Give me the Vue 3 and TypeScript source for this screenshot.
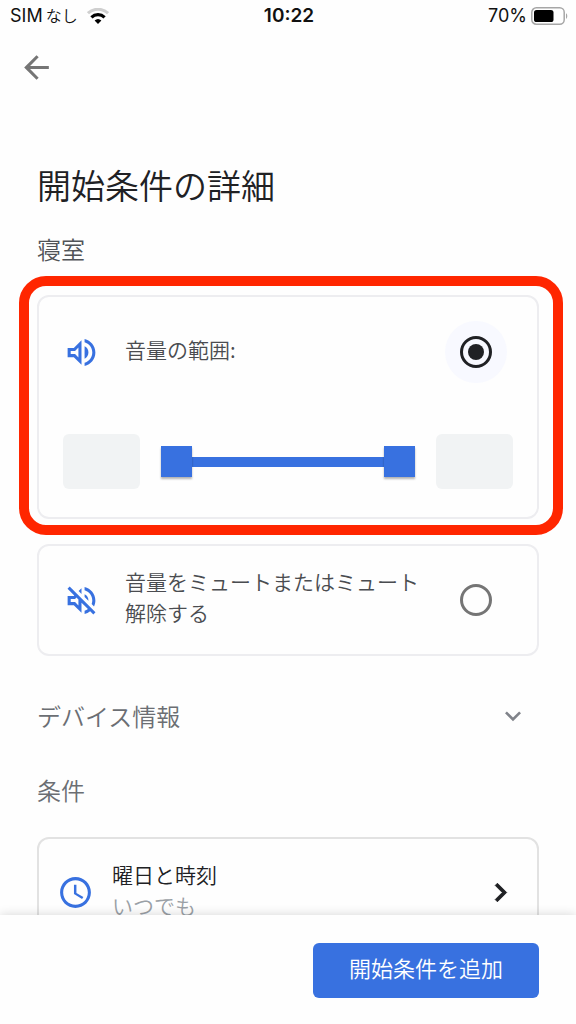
<script setup lang="ts">
import { ref } from 'vue'

type Trigger = 'range' | 'mute'

const selected = ref<Trigger>('range')
const low = ref<number>(0)
const high = ref<number>(100)
const lowText = ref<string>('')
const highText = ref<string>('')
</script>

<template>
  <div class="screen">
    <header>
      <div class="status">
        <div class="carrier">
          <span class="sim">SIM<span class="none">なし</span></span>
          <svg class="wifi" viewBox="0 0 22 16" aria-hidden="true">
            <path d="M1 5.2a14.6 14.6 0 0 1 20 0" fill="none" stroke="#cfcfcf" stroke-width="3" />
            <path d="M4.4 9.3a9.6 9.6 0 0 1 13.2 0" fill="none" stroke="#000" stroke-width="3.2" />
            <path d="M11 16l-3.4-3.4a5 5 0 0 1 6.8 0z" fill="#000" />
          </svg>
        </div>
        <time>10:22</time>
        <div class="power">
          <span>70%</span>
          <svg class="battery" viewBox="0 0 37 18" aria-hidden="true">
            <rect x="0.8" y="0.8" width="32.4" height="16.4" rx="4.5" fill="none" stroke="#a6a6a6" stroke-width="1.5" />
            <rect x="3" y="3" width="19.5" height="12" rx="2.6" fill="#000" />
            <path d="M35 6.2c1.7.8 1.7 4.8 0 5.6z" fill="#a6a6a6" />
          </svg>
        </div>
      </div>
      <nav>
        <button class="back" type="button" aria-label="戻る">
          <svg class="icon" viewBox="0 0 24 24"><path d="M20 11H7.83l5.59-5.59L12 4l-8 8 8 8 1.41-1.41L7.83 13H20v-2z" /></svg>
        </button>
      </nav>
    </header>

    <main>
      <h1>開始条件の詳細</h1>
      <h2 class="room">寝室</h2>

      <section class="card range-card">
        <div class="option">
          <svg class="icon blue" viewBox="0 0 24 24" aria-hidden="true">
            <path d="M3 9v6h4l5 5V4L7 9H3zm7-.17v6.34L7.83 13H5v-2h2.83L10 8.83zM16.5 12A4.5 4.5 0 0 0 14 7.97v8.05c1.48-.73 2.5-2.25 2.5-4.02zM14 3.23v2.06c2.89.86 5 3.54 5 6.71s-2.11 5.85-5 6.71v2.06c4.01-.91 7-4.49 7-8.77s-2.99-7.86-7-8.77z" />
          </svg>
          <label for="trigger-range">音量の範囲:</label>
          <span class="halo"><input id="trigger-range" v-model="selected" type="radio" name="trigger" value="range" /></span>
        </div>
        <div class="levels">
          <input v-model="lowText" class="level" type="text" aria-label="最小音量" />
          <div class="slider">
            <input v-model.number="low" type="range" min="0" max="100" aria-label="最小" />
            <input v-model.number="high" type="range" min="0" max="100" aria-label="最大" />
          </div>
          <input v-model="highText" class="level" type="text" aria-label="最大音量" />
        </div>
      </section>

      <section class="card mute-card">
        <div class="option">
          <svg class="icon blue" viewBox="0 0 24 24" aria-hidden="true">
            <path d="M4.34 2.93L2.93 4.34 7.29 8.7 7 9H3v6h4l5 5v-6.59l4.18 4.18c-.65.49-1.38.88-2.18 1.11v2.06a8.94 8.94 0 0 0 3.61-1.75l2.05 2.05 1.41-1.41L4.34 2.93zM10 15.17L7.83 13H5v-2h2.83l.88-.88L10 11.41v3.76zM19 12c0 .82-.15 1.61-.41 2.34l1.53 1.53c.56-1.17.88-2.48.88-3.87 0-4.28-2.99-7.86-7-8.77v2.06c2.89.86 5 3.54 5 6.71zm-7-8l-1.88 1.88L12 7.76V4zm4.5 8A4.5 4.5 0 0 0 14 7.97v1.79l2.48 2.48c.01-.08.02-.16.02-.24z" />
          </svg>
          <label for="trigger-mute">音量をミュートまたはミュート解除する</label>
          <span class="halo"><input id="trigger-mute" v-model="selected" type="radio" name="trigger" value="mute" /></span>
        </div>
      </section>

      <button class="device" type="button">
        <span>デバイス情報</span>
        <svg viewBox="0 0 24 24" aria-hidden="true"><path d="M16.59 8.59L12 13.17 7.41 8.59 6 10l6 6 6-6z" /></svg>
      </button>

      <h2 class="conditions">条件</h2>

      <button class="card schedule" type="button">
        <svg class="icon blue" viewBox="0 0 24 24" aria-hidden="true">
          <path d="M11.99 2C6.47 2 2 6.48 2 12s4.47 10 9.99 10C17.52 22 22 17.52 22 12S17.52 2 11.99 2zM12 20c-4.42 0-8-3.58-8-8s3.58-8 8-8 8 3.58 8 8-3.58 8-8 8zm.6-13H11v6l5.25 3.25.85-1.33-4.5-2.67z" />
        </svg>
        <span class="when">
          <span>曜日と時刻</span>
          <span class="muted">いつでも</span>
        </span>
        <svg class="icon dark" viewBox="0 0 24 24" aria-hidden="true"><path d="M10 6L8.59 7.41 13.17 12l-4.58 4.59L10 18l6-6z" /></svg>
      </button>
    </main>

    <footer>
      <button class="add" type="button">開始条件を追加</button>
    </footer>
  </div>
</template>

<style>
body {
  margin: 0;
  background: #fefefe;
}
</style>

<style scoped>
.screen {
  display: flex;
  flex-direction: column;
  height: 100vh;
  background: #fefefe;
  color: #202124;
  font-family: "Noto Sans CJK JP", sans-serif;
  font-weight: 350;
}

button,
input {
  margin: 0;
  padding: 0;
  border: 0;
  background: none;
  color: inherit;
  font: inherit;
}

.icon {
  flex: none;
  display: block;
  width: 37px;
  height: 37px;
  fill: currentColor;
}

.blue {
  color: #3871e0;
}

.dark {
  color: #202124;
  stroke: currentColor;
  stroke-width: 0.6;
}

.status {
  display: grid;
  grid-template-columns: 1fr auto 1fr;
  align-items: center;
  height: 32px;
  padding: 0 8px 0 10px;
  color: #111;
  font-family: Inter, "Noto Sans CJK JP", sans-serif;
  font-size: 18px;
  font-weight: 400;
  line-height: 24px;
}

.carrier,
.power {
  display: flex;
  align-items: center;
}

.carrier {
  gap: 9px;
}

.sim {
  display: flex;
  gap: 3px;
}

.none {
  font-size: 16px;
  font-weight: 350;
}

.power {
  justify-content: flex-end;
  gap: 4px;
}

.wifi {
  width: 22px;
  height: 16px;
}

.battery {
  width: 37px;
  height: 18px;
}

time {
  font-size: 19px;
  font-weight: 600;
}

nav {
  padding: 17px 18px;
}

.back {
  display: block;
  color: #757575;
}

main {
  flex: 1;
  min-height: 0;
  padding: 58px 37px 0;
  overflow-y: auto;
  scrollbar-width: none;
}

h1,
h2 {
  margin: 0;
  font-weight: 350;
}

h1 {
  font-size: 34px;
  line-height: 48px;
}

h2,
.device {
  font-size: 24px;
  line-height: 36px;
}

.room {
  margin: 22px 0 28px;
  color: #505357;
}

.card {
  box-sizing: border-box;
  border: 2px solid #ededf0;
  border-radius: 12px;
}

.range-card {
  position: relative;
  padding: 24px 24px 28px;
}

.range-card::after {
  content: "";
  position: absolute;
  inset: -21px -26px -18px -20px;
  border: 10px solid #ff2600;
  border-radius: 27px;
  pointer-events: none;
}

.mute-card {
  margin-top: 25px;
  padding: 20px 24px;
}

.option {
  display: flex;
  align-items: center;
  padding-right: 6px;
}

.option label {
  flex: 1;
  margin: 0 20px 0 25px;
  padding-bottom: 6px;
  color: #4a4c50;
  font-size: 21px;
  line-height: 31px;
}

.halo {
  display: grid;
  place-items: center;
  width: 62px;
  height: 62px;
  border-radius: 50%;
}

.halo:has(:checked) {
  background: #f8f9ff;
}

input[type="radio"] {
  appearance: none;
  display: grid;
  place-items: center;
  box-sizing: border-box;
  width: 32px;
  height: 32px;
  border: 3px solid #757575;
  border-radius: 50%;
}

input[type="radio"]:checked {
  border-color: #202124;
}

input[type="radio"]:checked::before {
  content: "";
  width: 16px;
  height: 16px;
  border-radius: 50%;
  background: #202124;
}

.levels {
  display: flex;
  align-items: center;
  gap: 21px;
  margin-top: 51px;
}

.level {
  box-sizing: border-box;
  flex: none;
  width: 77px;
  height: 55px;
  border-radius: 6px;
  background: #f1f3f4;
  font-size: 21px;
  text-align: center;
}

.slider {
  flex: 1;
  display: grid;
  align-items: center;
  min-width: 0;
}

.slider::before {
  content: "";
  grid-area: 1 / 1;
  height: 10px;
  background: #3871e0;
}

.slider input {
  grid-area: 1 / 1;
  appearance: none;
  width: 100%;
  height: 31px;
  pointer-events: none;
}

.slider input::-webkit-slider-thumb {
  appearance: none;
  width: 31px;
  height: 31px;
  background: #3871e0;
  box-shadow: 0 2px 2px rgba(0, 0, 0, 0.3);
  pointer-events: auto;
}

.device {
  display: flex;
  align-items: center;
  justify-content: space-between;
  width: 100%;
  margin-top: 42px;
  padding-right: 10px;
  color: #6b6e73;
}

.device svg {
  width: 32px;
  height: 32px;
  fill: #80838a;
}

.conditions {
  margin: 38px 0 29px;
  color: #6b6e73;
}

.schedule {
  display: flex;
  align-items: center;
  width: 100%;
  padding: 20px 18px;
  border-color: #e2e2e2;
  font-size: 21px;
  line-height: 31px;
  text-align: left;
}

.when {
  flex: 1;
  display: flex;
  flex-direction: column;
  margin: 0 18px;
  padding-bottom: 5px;
}

.muted {
  color: #9aa0a6;
}

footer {
  position: relative;
  display: flex;
  justify-content: flex-end;
  padding: 28px 37px 26px;
  background: #fefefe;
  box-shadow: 0 0 10px rgba(0, 0, 0, 0.16);
}

.add {
  padding: 9px 36px 15px;
  border-radius: 6px;
  background: #3871e0;
  color: #fff;
  font-size: 22px;
  line-height: 31px;
}
</style>
